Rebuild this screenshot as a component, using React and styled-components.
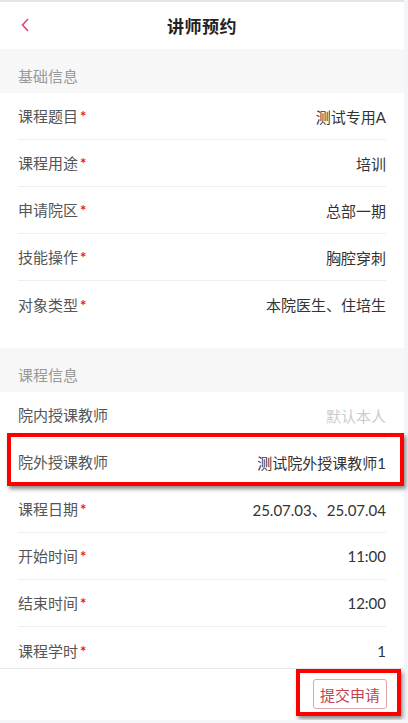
import styled, { createGlobalStyle } from "styled-components";

const GlobalStyle = createGlobalStyle`
  html, body {
    margin: 0;
    padding: 0;
    background: #f4f5f9;
    font-family: Lato, "Noto Sans CJK SC", sans-serif;
  }
`;

const Page = styled.div`
  position: relative;
  width: 404px;
  height: 720px;
  background: #fff;
  border-top: 2px solid #e4e4ec;
  box-sizing: border-box;
  display: flex;
  flex-direction: column;
`;

const Scroll = styled.div`
  flex: 1;
  overflow: hidden;
`;

const Header = styled.div`
  height: 47px;
  display: grid;
  grid-template-columns: 60px 1fr 60px;
  align-items: center;
  background: #fff;
`;

const Back = styled.div`
  display: flex;
  padding-left: 18px;
  padding-bottom: 1px;
`;

const Title = styled.h1`
  margin: 0;
  text-align: center;
  font-size: 17px;
  font-weight: 700;
  color: #222;
  letter-spacing: 0.5px;
`;

const Section = styled.div`
  height: 44px;
  margin-top: ${(p) => (p.gap ? "20px" : "0")};
  background: #f7f7f7;
  display: flex;
  align-items: flex-end;
  padding: 0 18px 7px;
  box-sizing: border-box;
  font-size: 15px;
  line-height: 20px;
  color: #999;
`;

const GapFill = styled.div`
  background: #f7f7f7;
`;

const List = styled.div`
  padding: 0 18px;
  background: #fff;
`;

const Row = styled.div`
  height: 47px;
  display: flex;
  align-items: center;
  justify-content: space-between;
  border-bottom: ${(p) => (p.last ? "none" : "1px solid #efefef")};
  box-sizing: border-box;
  font-size: 15px;
`;

const Label = styled.span`
  color: #555;
  display: flex;
  align-items: center;
  gap: 2px;
  line-height: 20px;
`;

const Star = styled.span`
  color: #f0162f;
  font-size: 15px;
  font-weight: 700;
  line-height: 20px;
`;

const Value = styled.span`
  color: ${(p) => (p.muted ? "#ccc" : "#333")};
`;

const Footer = styled.div`
  flex-shrink: 0;
  height: 52px;
  background: #fff;
  border-top: 1px solid #e8e8e8;
  box-sizing: border-box;
  display: flex;
  justify-content: flex-end;
  align-items: flex-start;
  padding: 10px 17px 0 0;
`;

const SubmitButton = styled.button`
  width: 74px;
  height: 30px;
  border: 1px solid #e3a3aa;
  border-radius: 3px;
  background: #fff;
  color: #c8414b;
  font-family: Lato, "Noto Sans CJK SC", sans-serif;
  font-size: 15px;
  padding: 0;
`;

/* red annotation frames drawn over the screen */
const Mark = styled.div`
  position: absolute;
  border: 4px solid #ff0000;
  box-sizing: border-box;
  box-shadow: 2px 3px 4px rgba(0, 0, 0, 0.45);
  pointer-events: none;
`;

const basic = [
  ["课程题目", "测试专用A", true],
  ["课程用途", "培训", true],
  ["申请院区", "总部一期", true],
  ["技能操作", "胸腔穿刺", true],
  ["对象类型", "本院医生、住培生", true],
];

const course = [
  ["院内授课教师", "默认本人", false, true],
  ["院外授课教师", "测试院外授课教师1", false],
  ["课程日期", "25.07.03、25.07.04", true],
  ["开始时间", "11:00", true],
  ["结束时间", "12:00", true],
  ["课程学时", "1", true],
];

const renderRows = (rows) =>
  rows.map(([label, value, required, muted], i) => (
    <Row key={label} last={i === rows.length - 1}>
      <Label>
        {label}
        {required && <Star>*</Star>}
      </Label>
      <Value muted={muted}>{value}</Value>
    </Row>
  ));

export default function App() {
  return (
    <>
      <GlobalStyle />
      <Page>
        <Scroll>
          <Header>
            <Back>
              <svg width="16" height="16" viewBox="0 0 16 16">
                <path d="M10 2 L4.5 8 L10 14" fill="none" stroke="#e4466f" strokeWidth="1.6" />
              </svg>
            </Back>
            <Title>讲师预约</Title>
            <span />
          </Header>
          <Section>基础信息</Section>
          <List>{renderRows(basic)}</List>
          <GapFill>
            <Section gap>课程信息</Section>
          </GapFill>
          <List>{renderRows(course)}</List>
        </Scroll>
        <Footer>
          <SubmitButton>提交申请</SubmitButton>
        </Footer>
        <Mark style={{ left: 7, top: 431, width: 397, height: 53 }} />
        <Mark style={{ left: 296, top: 667, width: 105, height: 47 }} />
      </Page>
    </>
  );
}
